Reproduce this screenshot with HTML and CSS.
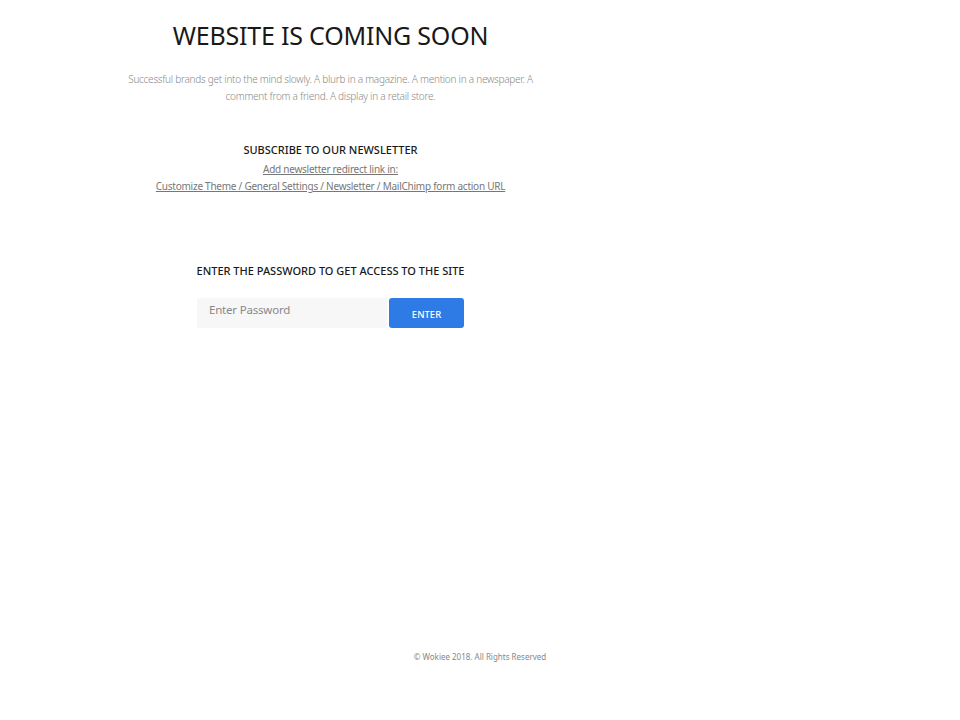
FILE: index.html
```html
<!DOCTYPE html>
<html>
<head>
<meta charset="utf-8">
<link rel="stylesheet" href="styles.css">
</head>
<body>
<div class="page">
  <main class="column">
    <h1 class="title">WEBSITE IS COMING SOON</h1>
    <p class="blurb">Successful brands get into the mind slowly. A blurb in a magazine. A mention in a newspaper. A comment from a friend. A display in a retail store.</p>
    <section class="newsletter">
      <h2 class="subtitle">SUBSCRIBE TO OUR NEWSLETTER</h2>
      <a class="link" href="#">Add newsletter redirect link in:</a>
      <a class="link" href="#">Customize Theme / General Settings / Newsletter / MailChimp form action URL</a>
    </section>
    <section class="password">
      <h2 class="subtitle">ENTER THE PASSWORD TO GET ACCESS TO THE SITE</h2>
      <form class="pw-form">
        <input class="pw-input" type="password" placeholder="Enter Password">
        <button class="pw-button" type="button">ENTER</button>
      </form>
    </section>
  </main>
  <footer class="footer">© Wokiee 2018. All Rights Reserved</footer>
</div>
</body>
</html>
```
FILE: styles.css
```css
html, body {
  margin: 0;
  padding: 0;
  background: #ffffff;
}
body {
  font-family: "Noto Sans", "Open Sans", sans-serif;
  color: #191919;
}
.page {
  height: 720px;
  display: flex;
  flex-direction: column;
}
.column {
  width: 661px;
  display: flex;
  flex-direction: column;
  align-items: center;
  text-align: center;
}
.title {
  margin: 17px 0 0;
  font-size: 25px;
  font-weight: 400;
  line-height: 36px;
  letter-spacing: -0.2px;
  color: #191919;
}
.blurb {
  margin: 18px 0 0;
  width: 420px;
  font-size: 10px;
  line-height: 17px;
  letter-spacing: -0.25px;
  color: #8a8a8a;
  font-weight: 300;
}
.newsletter {
  margin-top: 36px;
  display: flex;
  flex-direction: column;
  align-items: center;
}
.subtitle {
  margin: 0;
  font-size: 11px;
  line-height: 18px;
  font-weight: 500;
  color: #191919;
}
.link {
  font-size: 10px;
  line-height: 17px;
  letter-spacing: -0.25px;
  color: #777777;
  text-decoration: underline;
}
.newsletter .subtitle {
  margin-bottom: 2px;
}
.password {
  margin-top: 67px;
  display: flex;
  flex-direction: column;
  align-items: center;
}
.pw-form {
  margin: 18px 0 0;
  display: flex;
  gap: 2px;
}
.pw-input {
  box-sizing: border-box;
  width: 190px;
  height: 30px;
  border: none;
  background: #f7f7f8;
  padding: 0 12px 8px;
  font-family: inherit;
  font-size: 11.5px;
  letter-spacing: -0.2px;
  color: #333;
  outline: none;
}
.pw-input::placeholder {
  color: #888888;
}
.pw-button {
  width: 75px;
  height: 30px;
  border: none;
  border-radius: 3px;
  background: #2f7be6;
  color: #ffffff;
  font-family: inherit;
  font-size: 9.5px;
  font-weight: 500;
  padding: 2px 0 0;
}
.footer {
  margin-top: auto;
  margin-bottom: 57px;
  text-align: center;
  font-size: 8px;
  line-height: 12px;
  color: #888888;
}
```
